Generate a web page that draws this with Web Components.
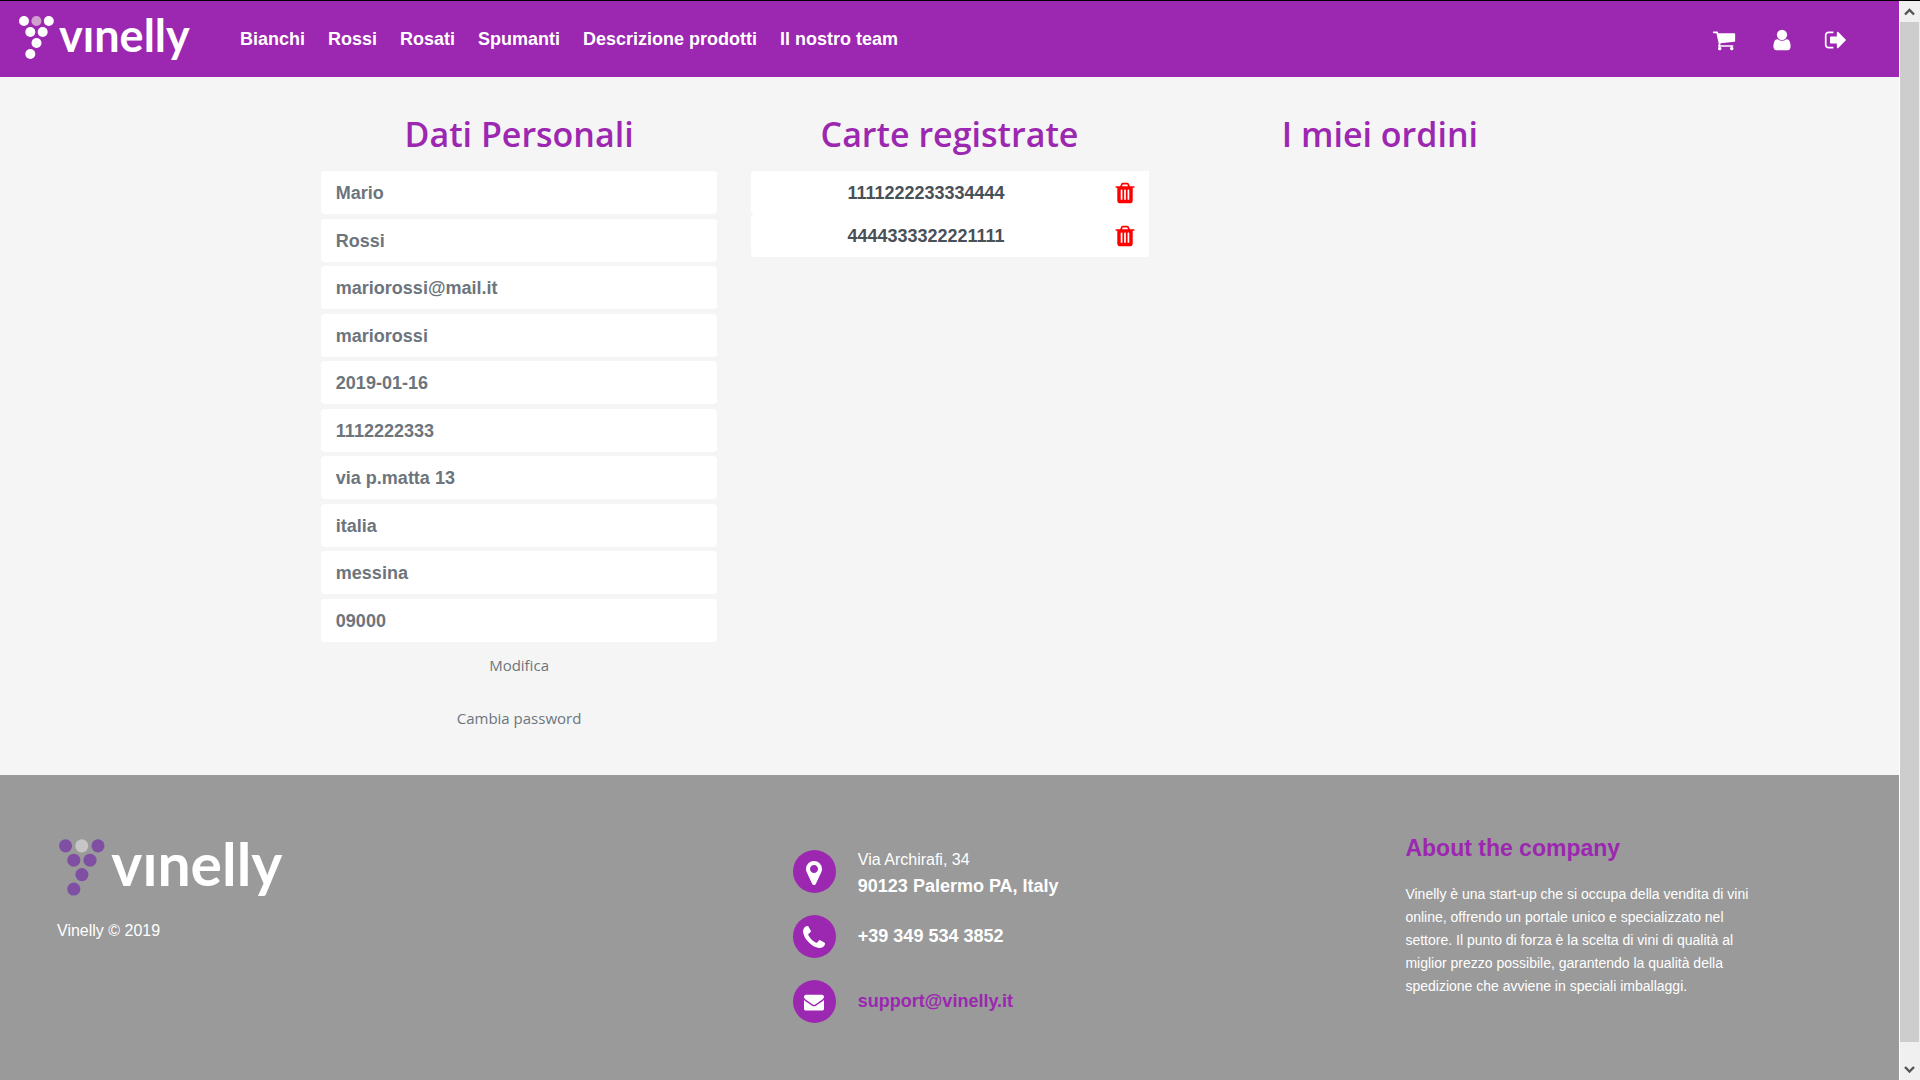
<!DOCTYPE html>
<html lang="it">
<head>
<meta charset="utf-8">
<title>Vinelly</title>
<style>
  :root {
    --brand: #9c27b0;
    --muted: #6c757d;
    --page: #f5f5f5;
    --footer: #9a9a9a;
    --ui: "Open Sans", "Noto Sans", sans-serif;
    --text: "Liberation Sans", Arial, sans-serif;
  }
  body { margin: 0; background: var(--page); font-family: var(--text); }
</style>
</head>
<body>
<vinelly-app></vinelly-app>

<script>
const ICONS = {
  cart: 'M704 1536q0 52-38 90t-90 38-90-38-38-90 38-90 90-38 90 38 38 90zm896 0q0 52-38 90t-90 38-90-38-38-90 38-90 90-38 90 38 38 90zm128-1088v512q0 24-16.5 42.5t-40.5 21.5l-1044 122q13 60 13 70 0 16-24 64h920q26 0 45 19t19 45-19 45-45 19h-1024q-26 0-45-19t-19-45q0-11 8-31.5t16-36 21.5-40 15.5-29.5l-177-823h-204q-26 0-45-19t-19-45 19-45 45-19h256q16 0 28.5 6.5t19.5 15.5 13 24.5 8 26 5.5 29.5 4.5 26h1201q26 0 45 19t19 45z',
  user: 'M1536 1399q0 109-62.5 187t-150.5 78h-854q-88 0-150.5-78t-62.5-187q0-85 8.5-160.5t31.5-152 58.5-131 94-89 134.5-34.5q131 128 313 128t313-128q76 0 134.5 34.5t94 89 58.5 131 31.5 152 8.5 160.5zm-256-887q0 159-112.5 271.5t-271.5 112.5-271.5-112.5-112.5-271.5 112.5-271.5 271.5-112.5 271.5 112.5 112.5 271.5z',
  logout: 'M704 1440q0 4 1 20t.5 26.5-3 23.5-10 19.5-20.5 6.5h-320q-119 0-203.5-84.5t-84.5-203.5v-704q0-119 84.5-203.5t203.5-84.5h320q13 0 22.5 9.5t9.5 22.5q0 4 1 20t.5 26.5-3 23.5-10 19.5-20.5 6.5h-320q-66 0-113 47t-47 113v704q0 66 47 113t113 47h312l11.5 1 11.5 3 8 5.5 7 9 2 13.5zm928-544q0 26-19 45l-544 544q-19 19-45 19t-45-19-19-45v-288h-448q-26 0-45-19t-19-45v-384q0-26 19-45t45-19h448v-288q0-26 19-45t45-19 45 19l544 544q19 19 19 45z',
  marker: 'M1152 640q0-106-75-181t-181-75-181 75-75 181 75 181 181 75 181-75 75-181zm256 0q0 109-33 179l-364 774q-16 33-47.5 52t-67.5 19-67.5-19-46.5-52l-365-774q-33-70-33-179 0-212 150-362t362-150 362 150 150 362z',
  phone: 'M1600 1240q0 27-10 70.5t-21 68.5q-21 50-122 106-94 51-186 51-27 0-53-3.5t-57.5-12.5-47-14.5-55.5-20.5-49-18q-98-35-175-83-127-79-264-216t-216-264q-48-77-83-175-3-9-18-49t-20.5-55.5-14.5-47-12.5-57.5-3.5-53q0-92 51-186 56-101 106-122 25-11 68.5-21t70.5-10q14 0 21 3 18 6 53 76 11 19 30 54t35 63.5 31 53.5q3 4 17.5 25t21.5 35.5 7 28.5q0 20-28.5 50t-62 55-62 53-28.5 46q0 9 5 22.5t8.5 20.5 14 24 11.5 19q76 137 174 235t235 174q2 1 19 11.5t24 14 20.5 8.5 22.5 5q18 0 46-28.5t53-62 55-62 50-28.5q14 0 28.5 7t35.5 21.5 25 17.5q25 15 53.5 31t63.5 35 54 30q70 35 76 53 3 7 3 21z',
  envelope: 'M1792 710v794q0 66-47 113t-113 47h-1472q-66 0-113-47t-47-113v-794q44 49 101 87 362 246 497 345 57 42 92.5 65.5t94.5 48 110 24.5h2q51 0 110-24.5t94.5-48 92.5-65.5q170-123 498-345 57-39 100-87zm0-294q0 79-49 151t-122 123q-376 261-468 325-10 7-42.5 31t-54 38.5-52 32.5-57.5 27-50 9h-2q-23 0-50-9t-57.5-27-52-32.5-54-38.5-42.5-31q-91-64-262-182.5t-205-142.5q-62-42-117-115.5t-55-136.5q0-78 41.5-130t118.5-52h1472q65 0 112.5 47t47.5 113z',
  trash: 'M704 1376v-704q0-14-9-23t-23-9h-64q-14 0-23 9t-9 23v704q0 14 9 23t23 9h64q14 0 23-9t9-23zm256 0v-704q0-14-9-23t-23-9h-64q-14 0-23 9t-9 23v704q0 14 9 23t23 9h64q14 0 23-9t9-23zm256 0v-704q0-14-9-23t-23-9h-64q-14 0-23 9t-9 23v704q0 14 9 23t23 9h64q14 0 23-9t9-23zm-544-992h448l-48-117q-7-9-17-11h-317q-10 2-17 11zm928 32v64q0 14-9 23t-23 9h-96v948q0 83-47 143.5t-113 60.5h-832q-66 0-113-58.5t-47-141.5v-952h-96q-14 0-23-9t-9-23v-64q0-14 9-23t23-9h309l70-167q15-37 54-63t79-26h320q40 0 79 26t54 63l70 167h309q14 0 23 9t9 23z'
};

function define(name, render) {
  customElements.define(name, class extends HTMLElement {
    connectedCallback() {
      if (this.shadowRoot) return;
      const root = this.attachShadow({ mode: 'open' });
      root.innerHTML = render(this);
    }
  });
}

define('v-icon', el => `
  <style>
    :host { display: block; width: 24px; height: 24px; }
    svg { display: block; width: 100%; height: 100%; fill: currentColor; }
  </style>
  <svg viewBox="0 0 1792 1792" aria-hidden="true"><path d="${ICONS[el.getAttribute('name')]}"/></svg>`);

define('vinelly-logo', () => `
  <style>
    :host { display: block; width: 172px; color: #fff; }
    svg { display: block; width: 100%; height: auto; overflow: visible; }
    .dots { fill: var(--grape, #fff); }
    .light { fill: var(--grape-light, #d29fcf); }
    text { font: 700 45px Lato, sans-serif; fill: currentColor; }
  </style>
  <svg viewBox="0 0 172 48" role="img" aria-label="vinelly">
    <g class="dots">
      <circle cx="5" cy="6" r="5"/><circle class="light" cx="17.4" cy="6" r="5"/><circle cx="29.8" cy="6" r="5"/>
      <circle cx="11.3" cy="17" r="5"/><circle cx="23.7" cy="17" r="5"/>
      <circle cx="17.5" cy="28" r="5"/>
      <circle cx="11.3" cy="39" r="5"/>
    </g>
    <text x="40" y="37">vınelly</text>
  </svg>`);

define('site-header', () => `
  <style>
    :host { display: flex; align-items: center; box-sizing: border-box; height: 76px; padding: 0 51px 0 19px; background: var(--brand); color: #fff; }
    nav { display: flex; gap: 23px; margin-left: 49px; }
    a { color: #fff; text-decoration: none; font: 700 18px/27px var(--text); }
    .tools { display: flex; gap: 30px; margin-left: auto; padding-top: 2px; }
    .tools a:first-child { width: 28px; }
  </style>
  <vinelly-logo></vinelly-logo>
  <nav>
    <a href="#bianchi">Bianchi</a><a href="#rossi">Rossi</a><a href="#rosati">Rosati</a>
    <a href="#spumanti">Spumanti</a><a href="#descrizione">Descrizione prodotti</a><a href="#team">Il nostro team</a>
  </nav>
  <div class="tools">
    <a href="#carrello" aria-label="Carrello"><v-icon name="cart"></v-icon></a>
    <a href="#profilo" aria-label="Profilo"><v-icon name="user"></v-icon></a>
    <a href="#esci" aria-label="Esci"><v-icon name="logout"></v-icon></a>
  </div>`);

define('profile-column', el => `
  <style>
    :host { display: block; padding: 0 17px; }
    h2 { margin: 0 0 15px; font: 600 34px/44px var(--ui); color: var(--brand); text-align: center; }
  </style>
  <section><h2>${el.getAttribute('heading')}</h2><slot></slot></section>`);

define('profile-field', el => `
  <style>
    :host { display: block; }
    input { display: block; box-sizing: border-box; width: 100%; height: 43px; padding: 2px 15px 0; border: 0; border-radius: 4px; background: #fff; color: var(--muted); font: 700 18px/27px var(--text); }
  </style>
  <input type="text" aria-label="${el.getAttribute('label')}" value="${el.getAttribute('value')}">`);

define('profile-form', () => `
  <style>
    :host { display: block; }
    form { display: flex; flex-direction: column; }
    profile-field:nth-child(odd) { margin-bottom: 5px; }
    profile-field:nth-child(even) { margin-bottom: 4px; }
    button { align-self: center; height: 38px; padding: 0 12px; border: 0; background: none; color: var(--muted); font: 400 15px/24px var(--ui); }
    button + button { margin-top: 15px; }
  </style>
  <form>
    <profile-field label="Nome" value="Mario"></profile-field>
    <profile-field label="Cognome" value="Rossi"></profile-field>
    <profile-field label="Email" value="mariorossi@mail.it"></profile-field>
    <profile-field label="Username" value="mariorossi"></profile-field>
    <profile-field label="Data di nascita" value="2019-01-16"></profile-field>
    <profile-field label="Telefono" value="1112222333"></profile-field>
    <profile-field label="Indirizzo" value="via p.matta 13"></profile-field>
    <profile-field label="Nazione" value="italia"></profile-field>
    <profile-field label="Città" value="messina"></profile-field>
    <profile-field label="CAP" value="09000"></profile-field>
    <button type="button">Modifica</button>
    <button type="button">Cambia password</button>
  </form>`);

define('saved-card', el => `
  <style>
    :host { display: flex; margin-right: -1px; border-radius: 4px 0 0 4px; background: #fff; }
    input { flex: 1; min-width: 0; box-sizing: border-box; height: 43px; padding: 2px 12px 0; border: 0; background: none; color: #495057; text-align: center; font: 700 18px/27px var(--text); }
    button { display: flex; align-items: center; padding: 0 12px; border: 0; background: none; color: #f00; }
  </style>
  <input type="text" readonly aria-label="Numero carta" value="${el.getAttribute('number')}">
  <button type="button" aria-label="Elimina carta"><v-icon name="trash"></v-icon></button>`);

define('contact-row', el => `
  <style>
    :host { display: flex; align-items: center; gap: 22px; height: 43px; color: #fff; }
    .disc { display: flex; flex: none; align-items: center; justify-content: center; box-sizing: border-box; width: 43px; height: 43px; border-radius: 50%; background: var(--brand); }
    v-icon { width: 28px; height: 28px; padding-top: 2px; }
    v-icon[name="envelope"] { width: 20px; height: 20px; padding-top: 0; }
  </style>
  <span class="disc"><v-icon name="${el.getAttribute('icon')}"></v-icon></span>
  <slot></slot>`);

define('site-footer', () => `
  <style>
    :host { display: grid; grid-template-columns: 41.2% 34.3% 20%; align-items: start; padding: 58px 56px 56px 57px; background: var(--footer); color: #fff; }
    vinelly-logo { width: 225px; margin: 5px 0 18px 2px; --grape: #7f4fa3; --grape-light: #c6c6c6; }
    p { margin: 0; }
    .copy { font-size: 16px; line-height: 24px; }
    .contacts { display: flex; flex-direction: column; gap: 22px; padding-top: 17px; }
    .street { padding-top: 2px; font: 400 16px/27px var(--text); }
    .strong { display: block; font: 700 18px/27px var(--text); }
    a { color: var(--brand); text-decoration: none; }
    h3 { margin: 0 0 20px; font: 700 23px/30px var(--text); color: var(--brand); }
    .about { font-size: 14px; line-height: 23px; }
  </style>
  <div>
    <vinelly-logo></vinelly-logo>
    <p class="copy">Vinelly © 2019</p>
  </div>
  <div class="contacts">
    <contact-row icon="marker"><p class="street">Via Archirafi, 34<span class="strong">90123 Palermo PA, Italy</span></p></contact-row>
    <contact-row icon="phone"><p class="strong">+39 349 534 3852</p></contact-row>
    <contact-row icon="envelope"><a class="strong" href="mailto:support@vinelly.it">support@vinelly.it</a></contact-row>
  </div>
  <div>
    <h3>About the company</h3>
    <p class="about">Vinelly è una start-up che si occupa della vendita di vini online, offrendo un portale unico e specializzato nel settore. Il punto di forza è la scelta di vini di qualità al miglior prezzo possibile, garantendo la qualità della spedizione che avviene in speciali imballaggi.</p>
  </div>`);

define('scroll-rail', () => `
  <style>
    :host { display: flex; flex-direction: column; align-items: center; box-sizing: border-box; width: 21px; padding-right: 1px; border-left: 1px solid #fff; background: #f0f0f0; }
    svg { display: block; flex: none; width: 19px; height: 21px; fill: none; stroke: #555; stroke-width: 2.4; }
    .thumb { flex: 1; width: 19px; margin-bottom: 17px; background: #cdcdcd; }
  </style>
  <svg viewBox="0 0 19 21" aria-hidden="true"><path d="M5 13.5 9.5 9 14 13.5"/></svg>
  <div class="thumb"></div>
  <svg viewBox="0 0 19 21" aria-hidden="true"><path d="M5 8 9.5 12.5 14 8"/></svg>`);

define('vinelly-app', () => `
  <style>
    :host { display: flex; box-sizing: border-box; min-height: 100vh; border-top: 1px solid #000; }
    .page { display: flex; flex: 1; flex-direction: column; min-width: 0; }
    main { display: grid; grid-template-columns: repeat(3, 1fr); align-items: start; width: 68%; margin: 0 auto; padding: 35px 0 38px; }
    site-footer { flex: 1; }
  </style>
  <div class="page">
    <site-header></site-header>
    <main>
      <profile-column heading="Dati Personali"><profile-form></profile-form></profile-column>
      <profile-column heading="Carte registrate">
        <saved-card number="1111222233334444"></saved-card>
        <saved-card number="4444333322221111"></saved-card>
      </profile-column>
      <profile-column heading="I miei ordini"></profile-column>
    </main>
    <site-footer></site-footer>
  </div>
  <scroll-rail></scroll-rail>`);
</script>
</body>
</html>
